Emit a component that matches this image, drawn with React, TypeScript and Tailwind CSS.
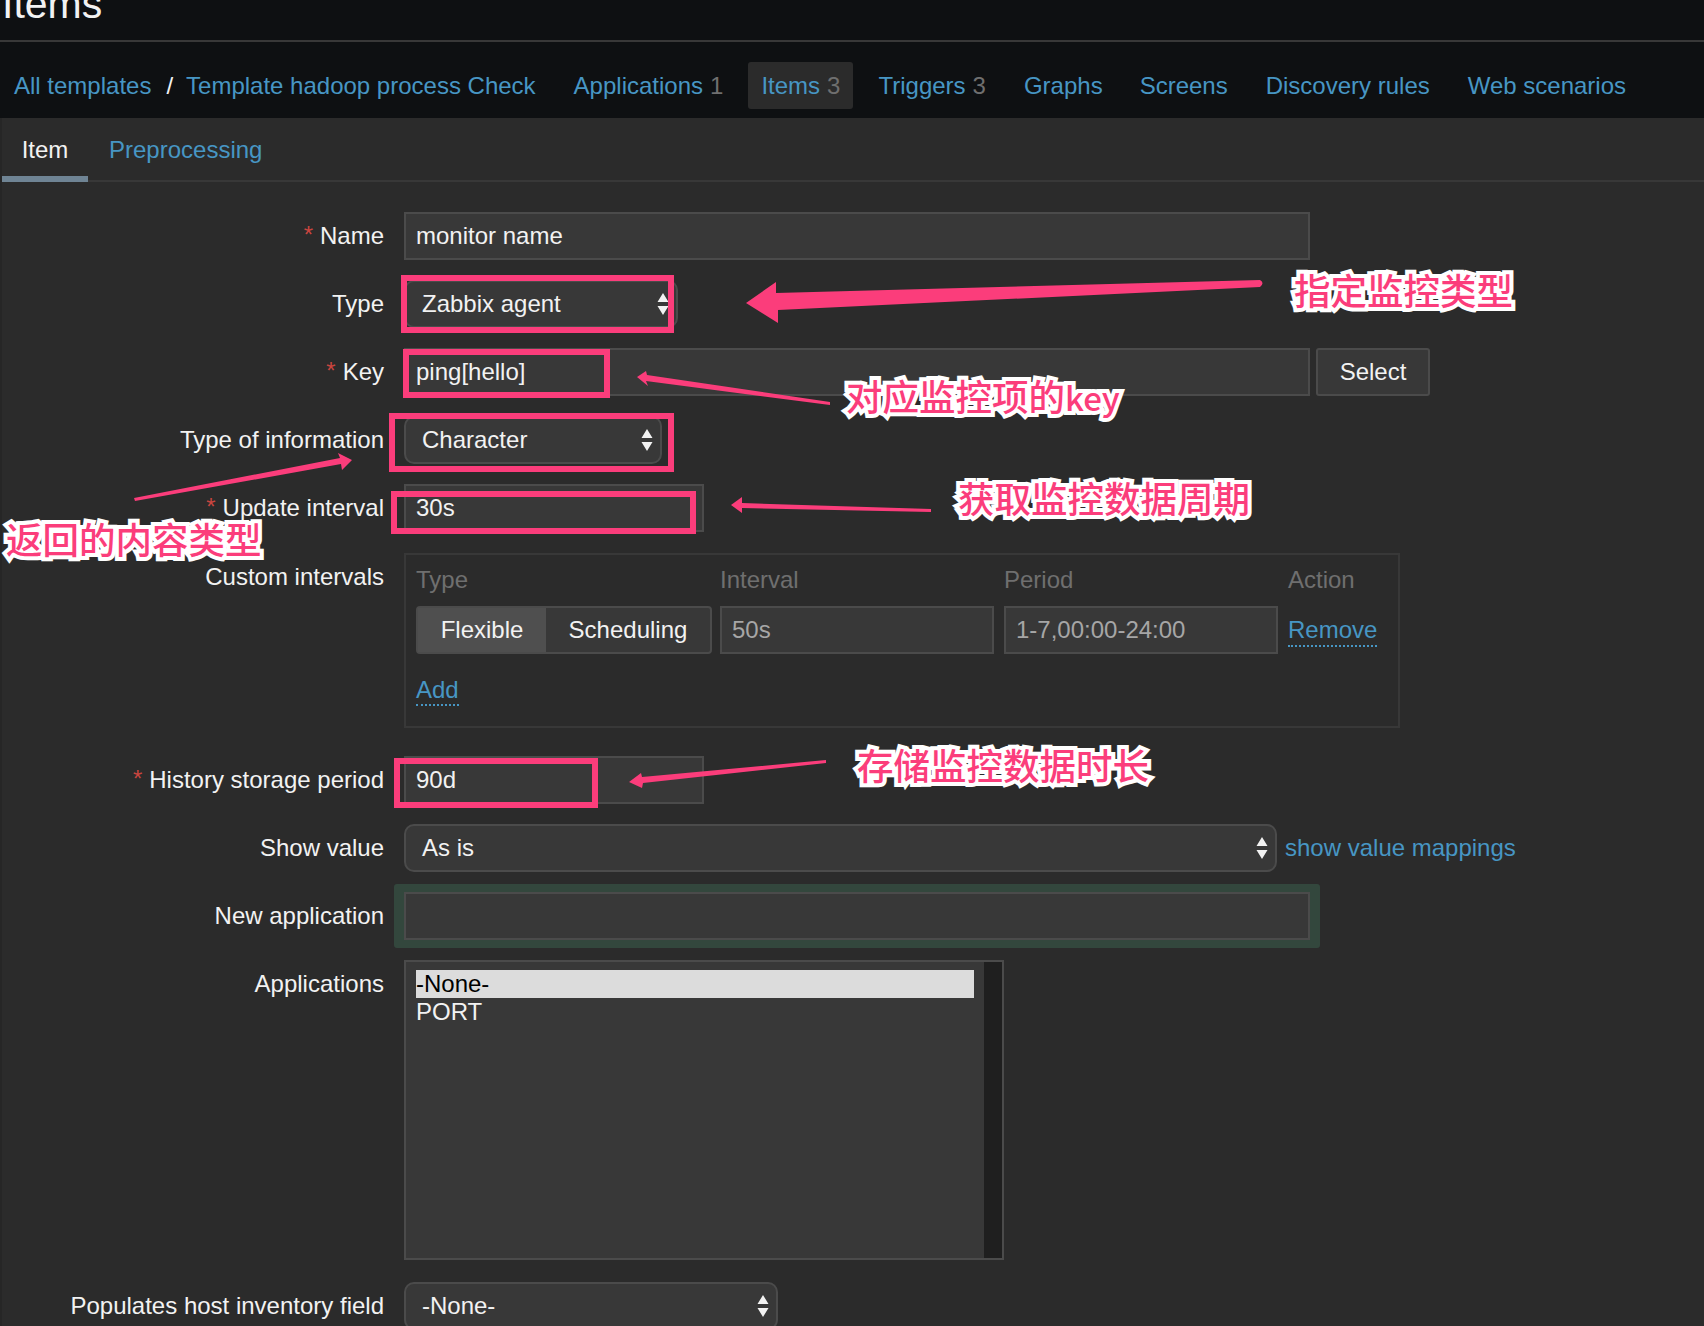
import type { ReactNode } from "react";

const sans = { fontFamily: '"Liberation Sans", Arial, sans-serif' };

function Arrows({ className = "" }: { className?: string }) {
  return (
    <svg width="12" height="24" viewBox="0 0 12 24" className={className}>
      <path d="M6 1 L11.5 10 L0.5 10 Z M0.5 14 L11.5 14 L6 23 Z" fill="#f2f2f2" />
    </svg>
  );
}

function Label({ text, required }: { text: string; required?: boolean }) {
  return (
    <div className="w-[384px] h-[47px] shrink-0 mr-5 flex items-center justify-end text-[24px] text-[#f2f2f2] whitespace-nowrap">
      {required && <span className="text-[#c9453f] mr-[7px] relative -top-[1px]">*</span>}
      {text}
    </div>
  );
}

function TextInput({ value, className = "", muted }: { value: string; className?: string; muted?: boolean }) {
  return (
    <input
      readOnly
      value={value}
      className={`h-[48px] bg-[#383838] border-2 border-[#4b4b4b] px-[10px] text-[24px] outline-none ${muted ? "text-[#a6a6a6]" : "text-[#f2f2f2]"} ${className}`}
    />
  );
}

function Select({ value, className = "" }: { value: string; className?: string }) {
  return (
    <div className={`h-[48px] bg-[#383838] border-2 border-[#4b4b4b] rounded-[10px] pl-[16px] pr-[7px] flex items-center justify-between text-[24px] text-[#f2f2f2] ${className}`}>
      <span>{value}</span>
      <Arrows />
    </div>
  );
}

const links = [
  { t: "Applications", n: "1", cls: "" },
  { t: "Items", n: "3", cls: "bg-[#2b2b2b]" },
  { t: "Triggers", n: "3", cls: "" },
  { t: "Graphs", cls: "" },
  { t: "Screens", cls: "-ml-[1px]" },
  { t: "Discovery rules", cls: "" },
  { t: "Web scenarios", cls: "" },
];

function Note({ children, x, y }: { children: ReactNode; x: number; y: number }) {
  return (
    <div
      className="absolute text-[36.5px] leading-[42px] font-medium text-[#fb3d7b] whitespace-nowrap [-webkit-text-stroke:8px_white] [paint-order:stroke_fill] [stroke-linejoin:round]"
      style={{ left: x, top: y, fontFamily: '"Noto Sans CJK SC", "Liberation Sans", sans-serif' }}
    >
      {children}
    </div>
  );
}

function Box({ x, y, w, h }: { x: number; y: number; w: number; h: number }) {
  return <div className="absolute border-[6px] border-[#fb3d7b]" style={{ left: x, top: y, width: w, height: h }} />;
}

export default function App() {
  return (
    <div className="relative w-[1704px] h-[1326px] overflow-hidden bg-[#2b2b2b]" style={sans}>
      {/* title */}
      <header className="h-[42px] bg-[#0e1012] border-b-2 border-[#383838] overflow-hidden">
        <h1 className="text-[41px] leading-[47px] -mt-[19px] text-[#f2f2f2] pl-[2px]">Items</h1>
      </header>

      {/* breadcrumb nav */}
      <nav className="h-[76px] bg-[#0e1012] flex items-start text-[24px] text-[#4796c4] pl-[14px] pt-[20px] whitespace-nowrap">
        <span className="h-[47px] leading-[47px]">All templates</span>
        <span className="h-[47px] leading-[47px] text-[#f2f2f2] ml-[15px] mr-[13px]">/</span>
        <span className="h-[47px] leading-[47px]">Template hadoop process Check</span>
        <div className="flex gap-[12px] ml-[25px]">
          {links.map((l) => (
            <div key={l.t} className={`h-[47px] px-[13px] flex items-center gap-[7px] rounded-[3px] ${l.cls}`}>
              <span>{l.t}</span>
              {l.n && <span className="text-[#6f6f6f]">{l.n}</span>}
            </div>
          ))}
        </div>
      </nav>

      {/* main */}
      <main className="border-l-2 border-[#262626] h-[1208px]">
        <div className="h-[64px] flex border-b-2 border-[#383838] text-[24px]">
          <div className="w-[86px] h-[64px] flex items-center justify-center text-[#f2f2f2] border-b-[6px] border-[#6f8494] pt-[6px]">Item</div>
          <div className="h-[62px] flex items-center pl-[21px] text-[#4796c4] pt-[2px]">Preprocessing</div>
        </div>

        <form className="pt-[30px] -ml-[2px]">
          <div className="flex mb-[20px]">
            <Label text="Name" required />
            <TextInput value="monitor name" className="w-[906px]" />
          </div>
          <div className="flex mb-[20px]">
            <Label text="Type" />
            <Select value="Zabbix agent" className="w-[274px]" />
          </div>
          <div className="flex mb-[20px]">
            <Label text="Key" required />
            <TextInput value="ping[hello]" className="w-[906px]" />
            <button type="button" className="ml-[6px] w-[114px] h-[48px] bg-[#383838] border-2 border-[#4b4b4b] rounded-[3px] text-[24px] text-[#f2f2f2]">Select</button>
          </div>
          <div className="flex mb-[20px]">
            <Label text="Type of information" />
            <Select value="Character" className="w-[258px]" />
          </div>
          <div className="flex mb-[21px]">
            <Label text="Update interval" required />
            <TextInput value="30s" className="w-[300px]" />
          </div>
          <div className="flex mb-[28px]">
            <Label text="Custom intervals" />
            <div className="w-[996px] h-[175px] border-2 border-[#383838] pl-[10px] text-[24px]">
              <div className="grid grid-cols-[304px_284px_284px_auto] h-[51px] pb-[2px] items-center text-[#6f6f6f]">
                <span>Type</span>
                <span>Interval</span>
                <span>Period</span>
                <span>Action</span>
              </div>
              <div className="grid grid-cols-[304px_284px_284px_auto]">
                <div className="flex w-[296px] h-[48px] border-2 border-[#4b4b4b] rounded-[4px] bg-[#383838] text-[#f2f2f2]">
                  <div className="w-[128px] bg-[#4f4f4f] flex items-center justify-center">Flexible</div>
                  <div className="flex-1 flex items-center justify-center">Scheduling</div>
                </div>
                <TextInput value="50s" muted className="w-[274px]" />
                <TextInput value="1-7,00:00-24:00" muted className="w-[274px]" />
                <div className="self-start mt-[5px] flex">
                  <span className="text-[#4796c4] border-b-2 border-dotted border-[#4796c4] h-[36px] leading-[38px]">Remove</span>
                </div>
              </div>
              <div className="mt-[21px] flex">
                <span className="text-[#4796c4] border-b-2 border-dotted border-[#4796c4] h-[31px] leading-[29px]">Add</span>
              </div>
            </div>
          </div>
          <div className="flex mb-[20px]">
            <Label text="History storage period" required />
            <TextInput value="90d" className="w-[300px]" />
          </div>
          <div className="flex mb-[20px]">
            <Label text="Show value" />
            <Select value="As is" className="w-[873px]" />
            <span className="ml-[8px] h-[48px] leading-[48px] text-[24px] text-[#4796c4]">show value mappings</span>
          </div>
          <div className="flex mb-[20px]">
            <Label text="New application" />
            <div className="-ml-[10px] -my-[8px] px-[10px] py-[8px] bg-[#33473d] rounded-[3px]">
              <TextInput value="" className="w-[906px] block" />
            </div>
          </div>
          <div className="flex mb-[22px]">
            <Label text="Applications" />
            <div className="w-[600px] h-[300px] bg-[#383838] border-2 border-[#4b4b4b] flex text-[24px] leading-[28px]">
              <div className="flex-1 px-[10px] pt-[8px]">
                <div className="bg-[#dcdcdc] text-black">-None-</div>
                <div className="text-[#f2f2f2]">PORT</div>
              </div>
              <div className="w-[18px] bg-[#1f1f1f]" />
            </div>
          </div>
          <div className="flex">
            <Label text="Populates host inventory field" />
            <Select value="-None-" className="w-[374px]" />
          </div>
        </form>
      </main>

      {/* annotations */}
      <Box x={401} y={275} w={273} h={58} />
      <Box x={403} y={349} w={207} h={49} />
      <Box x={389} y={413} w={285} h={59} />
      <Box x={391} y={491} w={305} h={43} />
      <Box x={394} y={758} w={204} h={50} />

      <svg width="1704" height="1326" viewBox="0 0 1704 1326" className="absolute left-0 top-0 pointer-events-none">
        <g fill="#fb3d7b">
          <path d="M746 303 L776 282 L776 293 L1260 280 Q1265 283 1260 287 L778 310 L778 323 Z" />
          <path d="M637 377 L646 371 L647 375 L830 402 L830 405 L646 381 L648 386 Z" />
          <path d="M352 460 L338 453 L340 458 L134 498 L135 501 L341 464 L342 470 Z" />
          <path d="M731 505 L742 497 L742 503 L931 509 L931 512 L742 508 L742 513 Z" />
          <path d="M629 782 L641 773 L642 777 L826 760 L826 763 L643 783 L642 788 Z" />
        </g>
      </svg>

      <Note x={1294} y={269}>指定监控类型</Note>
      <Note x={846} y={375}>对应监控项的<span className="text-[33px]">key</span></Note>
      <Note x={6} y={518}>返回的内容类型</Note>
      <Note x={958} y={477}>获取监控数据周期</Note>
      <Note x={857} y={744}>存储监控数据时长</Note>
    </div>
  );
}
